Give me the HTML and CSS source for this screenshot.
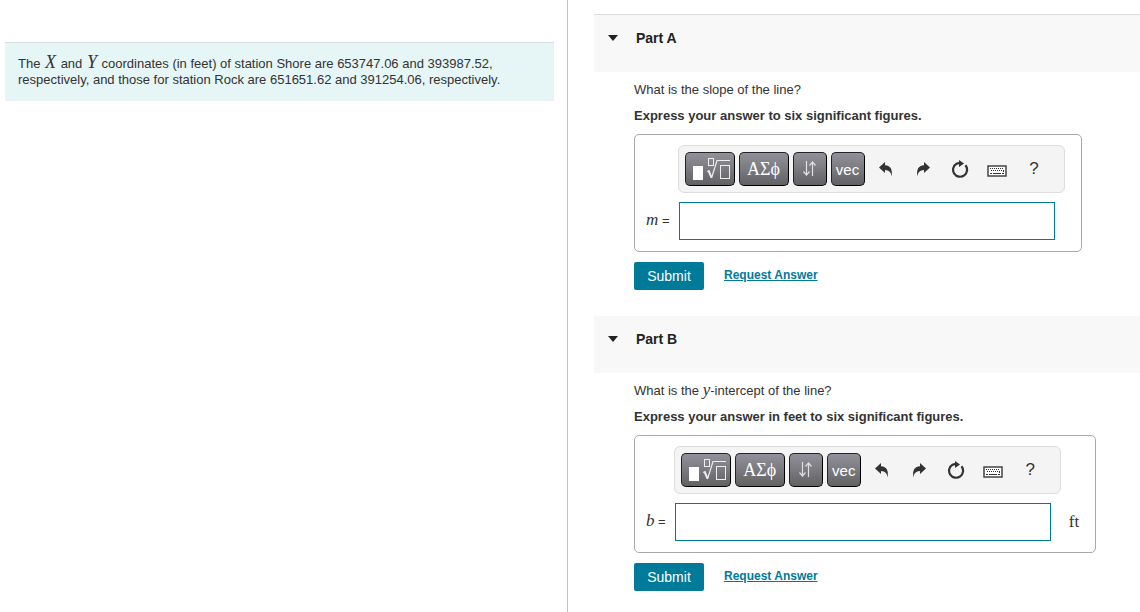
FILE: index.html
```
<!DOCTYPE html>
<html lang="en">
<head>
<meta charset="utf-8">
<title>Coordinates problem</title>
<link rel="stylesheet" href="styles.css">
</head>
<body>
<svg class="defs" aria-hidden="true">
  <symbol id="root" viewBox="0 0 40 26">
    <rect x="3" y="10" width="10" height="14" fill="#fff"/>
    <g fill="none" stroke="#eee">
      <rect x="18.500" y="2.500" width="5" height="7"/>
      <path d="M17 15.500l2-1"/>
      <path d="M18.500 14.500l3 7" stroke-width="2"/>
      <path d="M21.500 22L27 4.500h13" stroke-width="1.200"/>
      <rect x="30.500" y="9.500" width="9" height="13"/>
    </g>
  </symbol>
  <symbol id="arrows" viewBox="0 0 16 18">
    <path d="M4.500 1v14M1.500 11.500l3 3.500 3-3.500M10.500 16V2M7.500 5.500l3-3.500 3 3.500" fill="none" stroke="#e0e0e0" stroke-width="1.200"/>
  </symbol>
  <symbol id="undo" viewBox="0 0 16 16">
    <path d="M1 6.500L7 1v3.200c5 .3 8 3.500 6.500 11.300C13 11 11 9.200 7 9v3z"/>
  </symbol>
  <symbol id="reset" viewBox="0 0 18 18">
    <path d="M14.500 5.300A7 7 0 1 1 5.500 3.700Q7 3 9 3.200" fill="none" stroke="#333" stroke-width="2.200"/>
    <path d="M8 0l5 3.500L8 7z"/>
  </symbol>
  <symbol id="keyboard" viewBox="0 0 20 12">
    <rect x="1" y="1" width="18" height="10" fill="#fff" stroke="#444" stroke-width="1.500"/>
    <path d="M3 3.500h14M4 5.500h11" stroke="#333" stroke-dasharray="1 1"/>
    <path d="M3 8.500h2M6 8.500h8M15 8.500h2M16.500 5v2" stroke="#333"/>
  </symbol>
</svg>

<main class="page">
  <section class="intro">
    <p class="statement">The <i class="math big">X</i> and <i class="math big">Y</i> coordinates (in feet) of station Shore are 653747.06 and 393987.52, respectively, and those for station Rock are 651651.62 and 391254.06, respectively.</p>
  </section>

  <div class="parts">
    <section class="part">
      <h2 class="part-head first"><svg class="caret" viewBox="0 0 10 6"><path d="M0 0h10L5 6z"/></svg>Part A</h2>
      <div class="part-body">
        <p class="question">What is the slope of the line?</p>
        <p class="instruction">Express your answer to six significant figures.</p>
        <div class="answer">
          <div class="toolbar">
            <button class="key wide" aria-label="Templates"><svg class="i-root"><use href="#root"/></svg></button>
            <button class="key wide greek">ΑΣϕ</button>
            <button class="key" aria-label="Arrows"><svg class="i-arrows"><use href="#arrows"/></svg></button>
            <button class="key">vec</button>
            <button class="tool" aria-label="Undo"><svg class="i-undo"><use href="#undo"/></svg></button>
            <button class="tool" aria-label="Redo"><svg class="i-undo flip"><use href="#undo"/></svg></button>
            <button class="tool" aria-label="Reset"><svg class="i-reset"><use href="#reset"/></svg></button>
            <button class="tool" aria-label="Keyboard shortcuts"><svg class="i-keyboard"><use href="#keyboard"/></svg></button>
            <button class="tool help">?</button>
          </div>
          <label class="name" for="m"><i class="math">m</i> =</label>
          <input class="field" id="m" type="text">
        </div>
        <div class="actions"><button class="submit">Submit</button><a class="request" href="#">Request Answer</a></div>
      </div>
    </section>

    <section class="part">
      <h2 class="part-head"><svg class="caret" viewBox="0 0 10 6"><path d="M0 0h10L5 6z"/></svg>Part B</h2>
      <div class="part-body">
        <p class="question">What is the <i class="math">y</i>-intercept of the line?</p>
        <p class="instruction">Express your answer in feet to six significant figures.</p>
        <div class="answer">
          <div class="toolbar">
            <button class="key wide" aria-label="Templates"><svg class="i-root"><use href="#root"/></svg></button>
            <button class="key wide greek">ΑΣϕ</button>
            <button class="key" aria-label="Arrows"><svg class="i-arrows"><use href="#arrows"/></svg></button>
            <button class="key">vec</button>
            <button class="tool" aria-label="Undo"><svg class="i-undo"><use href="#undo"/></svg></button>
            <button class="tool" aria-label="Redo"><svg class="i-undo flip"><use href="#undo"/></svg></button>
            <button class="tool" aria-label="Reset"><svg class="i-reset"><use href="#reset"/></svg></button>
            <button class="tool" aria-label="Keyboard shortcuts"><svg class="i-keyboard"><use href="#keyboard"/></svg></button>
            <button class="tool help">?</button>
          </div>
          <label class="name" for="b"><i class="math">b</i> =</label>
          <input class="field" id="b" type="text">
          <span class="unit">ft</span>
        </div>
        <div class="actions"><button class="submit">Submit</button><a class="request" href="#">Request Answer</a></div>
      </div>
    </section>
  </div>
</main>
</body>
</html>
```

FILE: styles.css
```
* { box-sizing: border-box; }
body {
  margin: 0;
  background: #fff;
  color: #333;
  font: 13px/16px "Liberation Sans", Arial, sans-serif;
}
p, h2 { margin: 0; }
button { padding: 0; border: 0; background: none; font-family: inherit; color: inherit; cursor: pointer; }
svg { display: block; }
.defs { display: none; }

.page { display: grid; grid-template-columns: 568fr 572fr; min-height: 100vh; }
.intro { padding: 42px 13px 0 5px; border-right: 1px solid #bcc3cf; }
.statement { padding: 13px; border-top: 1px solid #d5dfdf; background: #e6f6f6; }
.math { font-family: "Liberation Serif", "Times New Roman", serif; font-size: 17px; line-height: 14px; }
.big { padding: 0 1px; font-size: 18px; line-height: 12px; }

.parts { padding: 14px 0 0 26px; }
.part-head {
  display: flex;
  gap: 18px;
  height: 57px;
  padding: 15px 14px;
  background: #f8f8f8;
  color: #222;
  font-size: 14px;
  line-height: 16px;
}
.first { height: 58px; border-top: 1px solid #ddd; }
.caret { width: 10px; height: 6px; margin-top: 5px; fill: #222; }
.part-body { padding: 10px 0 26px 40px; }
.question { margin-bottom: 10px; }
.instruction { margin-bottom: 10px; font-weight: bold; }

.answer {
  display: inline-grid;
  grid-template-columns: auto auto auto;
  row-gap: 9px;
  align-items: center;
  padding: 10px 16px 11px 11px;
  border: 1px solid #aaa;
  border-radius: 5px;
  vertical-align: top;
}
.toolbar {
  grid-column: 2;
  display: flex;
  align-items: center;
  gap: 4px;
  height: 48px;
  padding: 0 13px 0 6px;
  border: 1px solid #ddd;
  border-radius: 6px;
  background: #f4f4f4;
}
.key {
  display: flex;
  align-items: center;
  justify-content: center;
  width: 34px;
  height: 34px;
  border: 1px solid #222;
  border-right-color: #000;
  border-bottom-color: #000;
  border-radius: 5px;
  background: linear-gradient(#92919a, #626264);
  color: #fff;
  font-size: 15px;
}
.wide { width: 50px; }
.greek { font-family: "Liberation Serif", serif; font-size: 18px; }
.tool { display: flex; align-items: center; justify-content: center; width: 33px; height: 34px; fill: #333; }
.key + .tool { margin-left: 1px; }
.help { font-size: 17px; }
.i-root { width: 40px; height: 26px; }
.i-arrows { width: 16px; height: 18px; }
.i-undo { width: 16px; height: 16px; }
.flip { transform: scaleX(-1); }
.i-reset { width: 18px; height: 18px; }
.i-keyboard { width: 20px; height: 12px; margin-top: 4px; }
.name { grid-column: 1; padding-right: 8px; }
.field {
  width: 376px;
  max-width: 100%;
  height: 38px;
  margin-left: 1px;
  padding: 0 8px;
  border: 1px solid #007a99;
  background: #fff;
  font: inherit;
}
.unit { margin-left: 8px; font-family: "Liberation Serif", serif; font-size: 17px; }

.actions { display: flex; align-items: center; gap: 20px; margin-top: 10px; }
.submit { width: 70px; height: 28px; border-radius: 2px; background: #007a99; color: #fff; font-size: 14px; }
.request { margin-bottom: 2px; color: #007a99; font-size: 12px; font-weight: bold; }
```
